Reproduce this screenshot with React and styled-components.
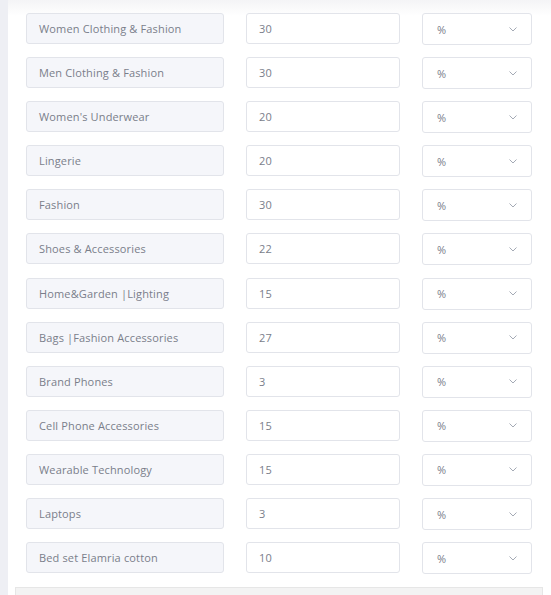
import React from 'react';
import styled, {createGlobalStyle} from 'styled-components';

const commissions = [
    {category: 'Women Clothing & Fashion', rate: '30'},
    {category: 'Men Clothing & Fashion', rate: '30'},
    {category: "Women's Underwear", rate: '20'},
    {category: 'Lingerie', rate: '20'},
    {category: 'Fashion', rate: '30'},
    {category: 'Shoes & Accessories', rate: '22'},
    {category: 'Home&Garden |Lighting', rate: '15'},
    {category: 'Bags |Fashion Accessories', rate: '27'},
    {category: 'Brand Phones', rate: '3'},
    {category: 'Cell Phone Accessories', rate: '15'},
    {category: 'Wearable Technology', rate: '15'},
    {category: 'Laptops', rate: '3'},
    {category: 'Bed set Elamria cotton', rate: '10'},
];

const Chevron = () => (
    <svg width="8" height="5" viewBox="0 0 8 5" fill="none">
        <path d="M0.5 0.5 L4 4 L7.5 0.5" stroke="#9aa0ad" strokeWidth="0.9"/>
    </svg>
);

const App = () => (
    <>
        <GlobalStyle/>
        <Page>
            <Sidebar/>
            <Main>
                <Panel>
                    {commissions.map(item => (
                        <Row key={item.category}>
                            <CategoryField>{item.category}</CategoryField>
                            <RateField>{item.rate}</RateField>
                            <UnitSelect>
                                <span>%</span>
                                <Chevron/>
                            </UnitSelect>
                        </Row>
                    ))}
                </Panel>
                <Footer/>
            </Main>
        </Page>
    </>
);

export default App;

const GlobalStyle = createGlobalStyle`
  body {
    margin: 0;
    background: #ffffff;
    font-family: "Open Sans", "Liberation Sans", sans-serif;
  }
`;

const Page = styled.div`
  display: flex;
  min-height: 595px;
  overflow: hidden;
  background: linear-gradient(to bottom, #f4f4f6 0px, #ffffff 16px);
`;

const Sidebar = styled.div`
  width: 8px;
  flex-shrink: 0;
  background: #eeeff4;
`;

const Main = styled.div`
  flex: 1;
  padding: 2px 9px 0 7px;
`;

const Panel = styled.div`
  display: flex;
  flex-direction: column;
  gap: 13.1px;
  padding: 11px 11px 14px 11px;
`;

const Row = styled.div`
  display: grid;
  grid-template-columns: 198px 154px 110px;
  column-gap: 22px;
  align-items: start;
  height: 31px;
`;

const Field = styled.div`
  display: flex;
  align-items: center;
  box-sizing: border-box;
  height: 31px;
  padding: 0 12px;
  border: 1px solid #e2e4ea;
  border-radius: 3px;
  font-size: 11px;
  letter-spacing: 0.15px;
  color: #7a7e8a;
  white-space: nowrap;
`;

const CategoryField = styled(Field)`
  background: #f5f6fa;
`;

const RateField = styled(Field)`
  background: #ffffff;
`;

const UnitSelect = styled(Field)`
  height: 32px;
  justify-content: space-between;
  padding: 0 14px 0 14px;
  background: #ffffff;
`;

const Footer = styled.div`
  height: 20px;
  border: 1px solid #e6e6e6;
  border-bottom: none;
  background: #f3f3f3;
`;
